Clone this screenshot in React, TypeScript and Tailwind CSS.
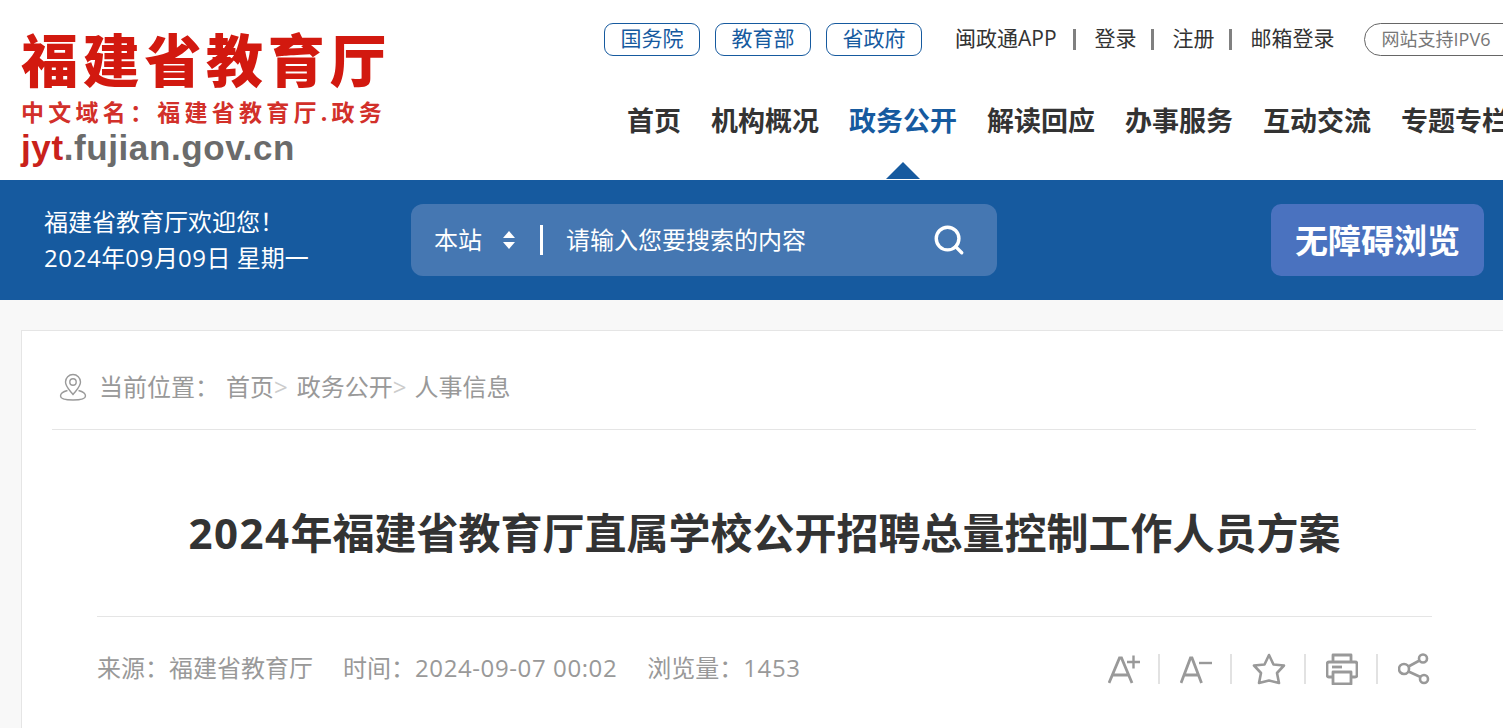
import { Search } from "lucide-react";

const cjk = "font-['Open_Sans','Noto_Sans_CJK_SC',sans-serif]";

const govLinks = ["国务院", "教育部", "省政府"];
const userLinks = ["登录", "注册", "邮箱登录"];
const navItems = ["首页", "机构概况", "政务公开", "解读回应", "办事服务", "互动交流", "专题专栏"];

function Logo() {
  return (
    <div className="flex w-[380px] flex-col pl-[21px] pt-[26px]">
      <div className="h-[68px] text-[57px] leading-[68px] font-black tracking-[4.7px] whitespace-nowrap text-[#d2190f]">福建省教育厅</div>
      <div className="mt-[4px] h-[28px] text-[23px] leading-[28px] font-bold tracking-[4.25px] whitespace-nowrap text-[#d2302a]">中文域名：福建省教育厅.政务</div>
      <div className="mt-[1px] h-[42px] font-['Liberation_Sans',sans-serif] text-[35px] leading-[42px] font-bold tracking-[0.6px] whitespace-nowrap text-[#6b6b6b]">
        <span className="text-[#c9211a]">jyt</span>.fujian.gov.cn
      </div>
    </div>
  );
}

function TopBar() {
  return (
    <div className="flex h-[33px] items-center">
      <div className="flex gap-[15px]">
        {govLinks.map((t) => (
          <a key={t} className="flex h-[33px] w-[96px] items-center justify-center rounded-[9px] border border-[#165a9f] pb-[1px] text-[21px] text-[#165a9f]">{t}</a>
        ))}
      </div>
      <a className="ml-[33px] pb-[2px] text-[21px] whitespace-nowrap text-[#333]">闽政通APP</a>
      <div className="ml-[16px] flex items-center">
        {userLinks.map((t) => (
          <div key={t} className="flex items-center">
            <span className="h-[21px] w-[3px] bg-[#808080]" />
            <a className="ml-[19px] mr-[14px] pb-[2px] text-[21px] whitespace-nowrap text-[#333]">{t}</a>
          </div>
        ))}
      </div>
      <div className="ml-[15px] flex h-[33px] w-[160px] shrink-0 items-center rounded-full border border-[#666] pb-[1px] pl-[17px] text-[18px] whitespace-nowrap text-[#777]">网站支持IPV6</div>
    </div>
  );
}

function Header() {
  return (
    <header className="flex h-[180px] bg-white">
      <Logo />
      <div className="ml-[224px] flex flex-col pt-[23px]">
        <TopBar />
        <nav className="mt-[44px] flex gap-[30px] pl-[23px]">
          {navItems.map((t, i) => (
            <a key={t} className={`relative text-[27px] leading-[42px] font-bold whitespace-nowrap ${i === 2 ? "text-[#165a9f]" : "text-[#333]"}`}>
              {t}
              {i === 2 && (
                <span className="absolute top-[62px] left-[37px] h-0 w-0 border-x-[17px] border-b-[17px] border-x-transparent border-b-[#165a9f]" />
              )}
            </a>
          ))}
        </nav>
      </div>
    </header>
  );
}

function SearchBar() {
  return (
    <div className="ml-[102px] flex h-[72px] w-[586px] items-center rounded-[12px] bg-[#4577b2] pl-[23px] text-[24px] text-white">
      <span className="pb-[1px]">本站</span>
      <svg className="ml-[20px]" width="14" height="20" viewBox="0 0 14 20" fill="white">
        <path d="M7 1 L13 8 L1 8 Z" />
        <path d="M7 19 L13 12 L1 12 Z" />
      </svg>
      <span className="ml-[24px] h-[30px] w-[3px] bg-white" />
      <span className="ml-[23px] pb-[1px]">请输入您要搜索的内容</span>
      <Search className="ml-auto mr-[31px] h-[34px] w-[34px]" strokeWidth={2.4} />
    </div>
  );
}

function BlueBar() {
  return (
    <section className="flex h-[120px] items-center bg-[#165a9f] pl-[44px] text-white">
      <div className="w-[265px] text-[24px] leading-[36px] whitespace-nowrap">
        <div>福建省教育厅欢迎您！</div>
        <div>
          <span className="tracking-[0.6px]">2024</span>年<span className="tracking-[0.6px]">09</span>月<span className="tracking-[0.6px]">09</span>日 星期一
        </div>
      </div>
      <SearchBar />
      <a className="ml-[274px] flex h-[72px] w-[213px] items-center justify-center rounded-[10px] bg-[#4a72bf] pt-[2px] text-[33px] font-bold">无障碍浏览</a>
    </section>
  );
}

function Breadcrumb() {
  return (
    <div className="flex h-[99px] items-center border-b border-[#e5e5e5] pl-[7px] pt-[14px] text-[24px] whitespace-nowrap text-[#999]">
      <svg width="28" height="28" viewBox="0 0 28 28" fill="none" stroke="#9a9a9a" strokeWidth="1.4">
        <path d="M14 21.5 C10 16.5 6.5 13.5 6.5 9 A7.5 7.5 0 0 1 21.5 9 C21.5 13.5 18 16.5 14 21.5 Z" />
        <circle cx="14" cy="9" r="3.2" />
        <path d="M8.5 17.5 C4.5 18.5 1.5 20.5 1.5 23 C1.5 25.5 6 27 14 27 C22 27 26.5 25.5 26.5 23 C26.5 20.5 23.5 18.5 19.5 17.5" />
      </svg>
      <span className="ml-[12px]">当前位置：</span>
      <span className="ml-[7px]">首页</span>
      <span className="text-[#ccc]">&gt;</span>
      <span className="ml-[9px]">政务公开</span>
      <span className="text-[#ccc]">&gt;</span>
      <span className="ml-[8px]">人事信息</span>
    </div>
  );
}

function ToolIcons() {
  const sep = <span className="h-[30px] w-[2px] -translate-x-[1px] bg-[#e2e2e2]" />;
  return (
    <div className="mr-[2px] flex items-center gap-[19px]">
      <svg width="32" height="30" viewBox="0 0 32 30" fill="none" stroke="#999" strokeWidth="2.8">
        <path d="M1 29 L11.5 4 L13.5 4 L24 29 M5 21 L20 21" />
        <path d="M19 8 L32 8 M25.5 1.5 L25.5 14.5" strokeWidth="2.4" />
      </svg>
      {sep}
      <svg width="32" height="30" viewBox="0 0 32 30" fill="none" stroke="#999" strokeWidth="2.8">
        <path d="M1 29 L10.5 4 L12 4 L21.5 29 M4.5 21 L18 21" />
        <path d="M19 9 L32 9" strokeWidth="2.4" />
      </svg>
      {sep}
      <svg width="34" height="32" viewBox="0 0 34 32" fill="none" stroke="#999" strokeWidth="2.6" strokeLinejoin="round">
        <path d="M17 2 L21.5 11.5 L32 12.5 L25 20 L27 30 L17 27.5 L7 30 L9 20 L2 12.5 L12.5 11.5 Z" />
      </svg>
      {sep}
      <svg width="32" height="32" viewBox="0 0 32 32" fill="none" stroke="#999" strokeWidth="2.8" strokeLinejoin="round">
        <path d="M7 9 L7 2 L25 2 L25 9" />
        <path d="M7 24 L3 24 A2 2 0 0 1 1 22 L1 11 A2 2 0 0 1 3 9 L29 9 A2 2 0 0 1 31 11 L31 22 A2 2 0 0 1 29 24 L25 24" />
        <rect x="7" y="19" width="18" height="12" />
        <path d="M6 14 L16 14" />
      </svg>
      {sep}
      <svg width="32" height="32" viewBox="0 0 32 32" fill="none" stroke="#999" strokeWidth="2.6">
        <circle cx="6" cy="16" r="5" />
        <circle cx="25" cy="5.5" r="4" />
        <circle cx="26" cy="26" r="4" />
        <path d="M10.5 13.5 L21.5 7.5 M10.5 18.5 L22.5 24" />
      </svg>
    </div>
  );
}

function Article() {
  return (
    <div className="pl-[45px] pr-[44px]">
      <h1 className="flex h-[186px] items-center justify-center pt-[18px] text-[42px] font-bold whitespace-nowrap text-[#333]">
        <span className="tracking-[1.5px]">2024</span>年福建省教育厅直属学校公开招聘总量控制工作人员方案
      </h1>
      <div className="flex h-[104px] items-center justify-between border-t border-[#e5e5e5] text-[24px] text-[#999]">
        <div className="flex gap-[30px] pb-[2px] whitespace-nowrap">
          <span>来源：福建省教育厅</span>
          <span>时间：<span className="tracking-[0.6px]">2024-09-07 00:02</span></span>
          <span>浏览量：<span className="tracking-[0.6px]">1453</span></span>
        </div>
        <ToolIcons />
      </div>
    </div>
  );
}

export default function App() {
  return (
    <div className={`h-[728px] w-[1503px] overflow-hidden bg-[#f8f8f8] ${cjk}`}>
      <Header />
      <BlueBar />
      <main className="ml-[21px] mt-[30px] h-[500px] w-[1490px] border border-[#e5e5e5] bg-white pl-[30px] pr-[34px]">
        <Breadcrumb />
        <Article />
      </main>
    </div>
  );
}
